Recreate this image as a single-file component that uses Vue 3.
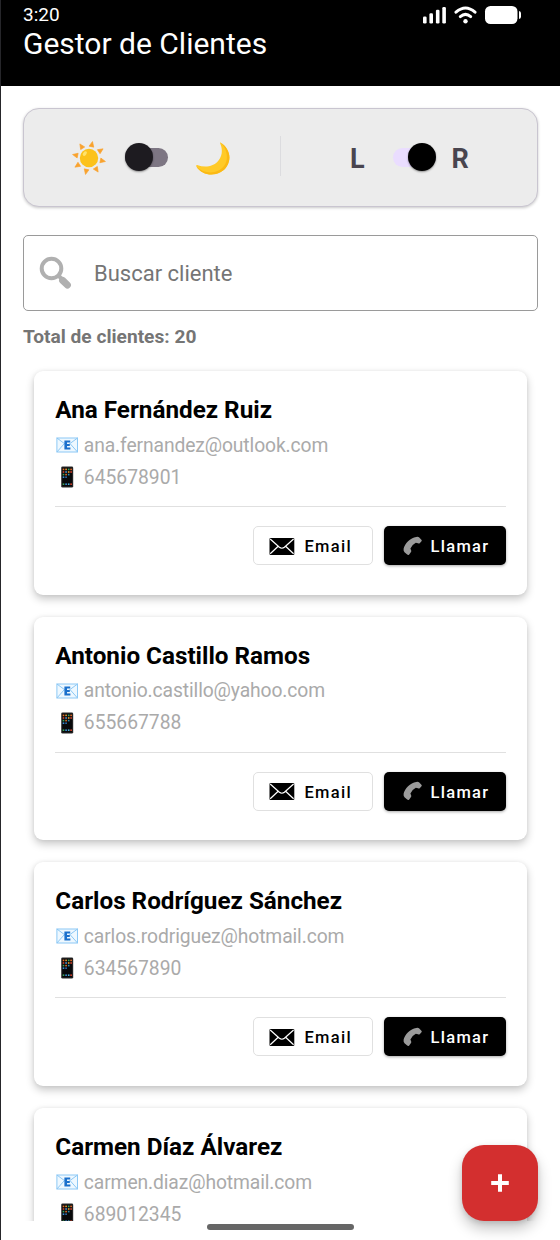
<script setup>
import { ref } from 'vue'

const total = ref(20)
const clients = ref([
  { name: 'Ana Fernández Ruiz', email: 'ana.fernandez@outlook.com', phone: '645678901' },
  { name: 'Antonio Castillo Ramos', email: 'antonio.castillo@yahoo.com', phone: '655667788' },
  { name: 'Carlos Rodríguez Sánchez', email: 'carlos.rodriguez@hotmail.com', phone: '634567890' },
  { name: 'Carmen Díaz Álvarez', email: 'carmen.diaz@hotmail.com', phone: '689012345' },
])
const rays = [12, 57, 102, 147, 192, 237, 282, 327]
const appDots = [
  [6, 4.6, '#e8702a'], [8.6, 4.6, '#f0a030'], [11.2, 4.6, '#3aa65a'], [13.6, 4.6, '#e8702a'],
  [6, 7.2, '#d8442c'], [8.6, 7.2, '#4a9ad8'], [11.2, 7.2, '#f0a030'], [13.6, 7.2, '#d8442c'],
  [6, 9.8, '#3aa65a'], [8.6, 9.8, '#e8702a'], [11.2, 9.8, '#2b8fb0'],
  [6, 12.4, '#3a8fd8'], [8.6, 12.4, '#2b6fb0'],
  [6, 19.4, '#3aa65a'], [8.6, 19.4, '#3a8fd8'], [11.2, 19.4, '#4ab0d8'], [13.6, 19.4, '#d8442c'],
]
</script>

<template>
  <div class="screen">
    <header class="top">
      <div class="status">
        <span class="time">3:20</span>
        <svg class="status-icons" width="100" height="20" viewBox="0 0 100 20" fill="#fff">
          <rect x="0" y="11.5" width="3.6" height="7" rx="1.3" />
          <rect x="6.4" y="8.2" width="3.6" height="10.3" rx="1.3" />
          <rect x="12.9" y="4.8" width="3.6" height="13.7" rx="1.3" />
          <rect x="19.3" y="2" width="3.6" height="16.5" rx="1.3" />
          <g fill="none" stroke="#fff" stroke-width="3" stroke-linecap="round">
            <path d="M33 7.2 Q42.5 -1.2 52 7.2" />
            <path d="M37.3 11.6 Q42.5 7.2 47.7 11.6" />
          </g>
          <circle cx="42.5" cy="16.2" r="2.2" />
          <rect x="62" y="1" width="32.5" height="18" rx="5.5" />
          <path d="M96 6 Q98 6.4 98 8.3 V11.7 Q98 13.6 96 14 Z" />
        </svg>
      </div>
      <h1>Gestor de Clientes</h1>
    </header>

    <main>
      <section class="panel">
        <div class="half theme">
          <svg class="sun" width="36" height="36" viewBox="-18 -18 36 36">
            <path v-for="r in rays" :key="r" :transform="`rotate(${r})`" d="M-2.4 -11.6 L0 -16.8 L2.4 -11.6 Z" fill="#f9a22d" stroke="#f9a22d" stroke-width=".6" stroke-linejoin="round" />
            <circle r="9.2" fill="#fcc21b" />
            <ellipse cx="-4.2" cy="-4.4" rx="1.6" ry="2.6" fill="#ffe36c" transform="rotate(40 -4.2 -4.4)" />
          </svg>
          <span class="switch off"><i></i></span>
          <svg class="moon" width="36" height="36" viewBox="0 0 36 36">
            <path d="M25.5 1.5 C34 7 37 16.5 32 25 C26 35.5 8.5 37 1.4 25.5 C0.8 24.2 1.6 23.7 2.8 24.2 C10 27 19 25.5 23.5 19.5 C28 13.7 27.3 7.3 25.2 2.4 C24.9 1.5 25.1 1.2 25.5 1.5Z" fill="#ffca28" />
            <path d="M25.5 1.5 C34 7 37 16.5 32 25 C26 35.5 8.5 37 1.4 25.5 C9 33.5 22.5 33.4 29 25 C34 18.2 32.3 8 25.5 1.5Z" fill="#fbb914" />
          </svg>
        </div>
        <div class="divider"></div>
        <div class="half hand">
          <b>L</b>
          <span class="switch on"><i></i></span>
          <b class="right">R</b>
        </div>
      </section>

      <label class="search">
        <svg width="34" height="34" viewBox="0 0 34 34" fill="none" stroke="#b0b0b0">
          <circle cx="12.5" cy="12.5" r="9.8" stroke-width="4" />
          <path d="M19.8 20 L23 23.2" stroke-width="4" />
          <path d="M23.6 24.4 L28.4 29" stroke-width="7" stroke-linecap="round" />
        </svg>
        <span>Buscar cliente</span>
      </label>

      <p class="total">Total de clientes: {{ total }}</p>

      <div class="list">
        <article v-for="c in clients" :key="c.phone" class="card">
          <h2>{{ c.name }}</h2>
          <p class="info">
            <svg width="24" height="24" viewBox="0 0 24 24">
              <rect x="1.9" y="5" width="20.6" height="14" fill="#eef8ff" stroke="#8cc8f5" stroke-width="1" />
              <path d="M1.9 5 L12.2 12.6 L22.5 5 M1.9 19 L9 11 M22.5 19 L15.4 11" fill="none" stroke="#8cc8f5" stroke-width="1" />
              <path d="M9.4 7.5h5.8v2.1h-3.2v1.4h2.8v2h-2.8v1.4h3.4v2.1h-6z" fill="#1b70cc" />
            </svg>
            <span class="mail">{{ c.email }}</span>
          </p>
          <p class="info phone">
            <svg width="24" height="24" viewBox="0 0 24 24">
              <rect x="6.2" y="1.4" width="12" height="21.2" rx="1.4" fill="#2b2b2b" />
              <rect x="7.2" y="2.6" width="10" height="18.8" fill="#08090b" />
              <rect v-for="(d, i) in appDots" :key="i" :x="d[0] + 1.7" :y="d[1] - 1" width="1.6" height="1.6" :fill="d[2]" />
            </svg>
            <span>{{ c.phone }}</span>
          </p>
          <div class="actions">
            <button class="btn email">
              <svg width="26" height="20" viewBox="0 0 26 20">
                <rect x=".5" y="1.9" width="24.8" height="17" rx="1" fill="#000" />
                <path d="M1.2 3 L10.4 11.3 Q12.9 13.2 15.4 11.3 L24.6 3 M1.2 17.8 L9.2 10.2 M24.6 17.8 L16.6 10.2" fill="none" stroke="#fff" stroke-width="1.2" />
              </svg>
              <span>Email</span>
            </button>
            <button class="btn call">
              <svg width="20" height="20" viewBox="0 0 20 20">
                <path d="M13.2 .9 Q15 .3 16 1.3 L18.4 3.7 Q19.2 4.5 18.5 5.3 L16.7 7.2 Q16 7.8 15 7.3 L12.8 6.7 Q8.9 8.6 7.4 12.6 L8.2 14.4 Q8.5 15.2 8 16 L6.2 18.4 Q5.3 19.4 4.2 18.6 L1.5 16.2 Q.3 15 .6 12.8 C1.5 7.5 7.4 1.9 13.2 .9Z" fill="#9b9b9b" />
              </svg>
              <span>Llamar</span>
            </button>
          </div>
        </article>
      </div>
    </main>

    <button class="fab" aria-label="Añadir">
      <svg width="20" height="20" viewBox="0 0 20 20"><path d="M10 1.2V18.8M1.2 10H18.8" stroke="#fff" stroke-width="4" /></svg>
    </button>
    <div class="home-bar"></div>
  </div>
</template>

<style>
body { background: #fff; }
</style>

<style scoped>
* { box-sizing: border-box; margin: 0; padding: 0; }
.screen {
  position: relative;
  width: 560px;
  height: 1240px;
  overflow: hidden;
  background: #fff;
  border-left: 1px solid #26262a;
  font-family: Roboto, "Liberation Sans", sans-serif;
}
.top { height: 86px; background: #000; color: #fff; padding: 5px 0 0 22px; }
.status { display: flex; justify-content: space-between; height: 20px; padding-right: 37px; }
.time { font-size: 19px; line-height: 20px; }
h1 { font-size: 30px; font-weight: 400; line-height: 36px; margin-top: 1px; white-space: nowrap; }
main { padding: 22px 0 0; }
.panel {
  display: flex;
  align-items: center;
  width: 515px;
  height: 98.5px;
  margin-left: 22px;
  background: #ececec;
  border: 1px solid #c9c5d0;
  border-radius: 16px;
  box-shadow: 0 1px 3px rgba(0, 0, 0, .22);
}
.half { flex: 1; display: flex; align-items: center; height: 40px; }
.divider { width: 1px; height: 40px; margin-bottom: 2px; background: #dcdcdf; }
.sun { margin: 2px 0 0 47px; }
.switch { position: relative; width: 43px; height: 28px; flex: none; }
.switch::before { content: ""; position: absolute; inset: 4.5px 0; border-radius: 10px; background: #7d7683; }
.switch i { position: absolute; top: 0; left: 0; width: 28px; height: 28px; border-radius: 50%; background: #1d1b20; box-shadow: 0 1px 2px rgba(0, 0, 0, .4); }
.switch.off { margin-left: 18px; }
.switch.on::before { background: #eaddff; }
.switch.on i { left: auto; right: 0; background: #000; }
.moon { margin: 4px 0 0 27px; }
.hand b { font-size: 27px; line-height: 32px; color: #49454f; width: 18px; margin: 3px 0 0 69px; }
.hand .switch { margin-left: 25px; }
.hand b.right { margin-left: 15.5px; }
.search {
  display: flex;
  align-items: center;
  width: 515px;
  height: 76px;
  margin: 28.5px 0 0 22px;
  border: 1px solid #9a9a9a;
  padding-left: 15px;
  border-radius: 5px;
  color: #757575;
}
.search span { font-size: 22px; margin-left: 21px; }
.total { margin: 14px 0 0 22px; height: 24px; font-size: 19.15px; line-height: 24px; font-weight: 700; color: #757575; }
.list {
  display: flex;
  flex-direction: column;
  gap: 22px;
  height: 872px;
  padding: 22px 33px 0 32.5px;
  overflow: hidden;
}
.card {
  flex: none;
  height: 223.7px;
  padding: 22px 21.5px 0 21.8px;
  border-radius: 9px;
  background: #fff;
  box-shadow: 0 4px 8px rgba(0, 0, 0, .22), 0 0 4px rgba(0, 0, 0, .06);
}
h2 { font-size: 24.25px; line-height: 34px; font-weight: 700; color: #000; white-space: nowrap; }
.info { display: flex; align-items: center; height: 32px; margin-top: 2px; font-size: 19.3px; color: #aaa; }
.info span { margin-left: 4.5px; white-space: nowrap; }
.info .mail { letter-spacing: -.11px; }
.info.phone { margin-top: 0; }
.actions { display: flex; justify-content: flex-end; gap: 11px; margin-top: 13px; padding-top: 19px; border-top: 1.5px solid #e0e0e0; }
.btn { display: flex; align-items: center; height: 39px; border: 0; border-radius: 5px; font: 500 16.5px Roboto, sans-serif; letter-spacing: 1.3px; }
.btn span { margin-top: 2px; }
.btn.email { width: 119.5px; padding-left: 15px; background: #fff; color: #000; border: 1.5px solid #e0e0e0; }
.btn.email span { margin-left: 9.5px; }
.btn.call { width: 122px; padding-left: 19.5px; background: #000; color: #fff; box-shadow: 0 1px 3px rgba(0, 0, 0, .35); }
.btn.call span { margin-left: 7.5px; }
.fab {
  position: absolute;
  left: 461px;
  top: 1145px;
  display: grid;
  place-items: center;
  width: 76px;
  height: 76px;
  border: 0;
  border-radius: 22px;
  background: #d32f2f;
  box-shadow: 0 8px 14px rgba(0, 0, 0, .22), 0 2px 5px rgba(0, 0, 0, .12);
}
.home-bar { position: absolute; left: 206px; top: 1224px; width: 147px; height: 6px; border-radius: 3px; background: #666; }
</style>
